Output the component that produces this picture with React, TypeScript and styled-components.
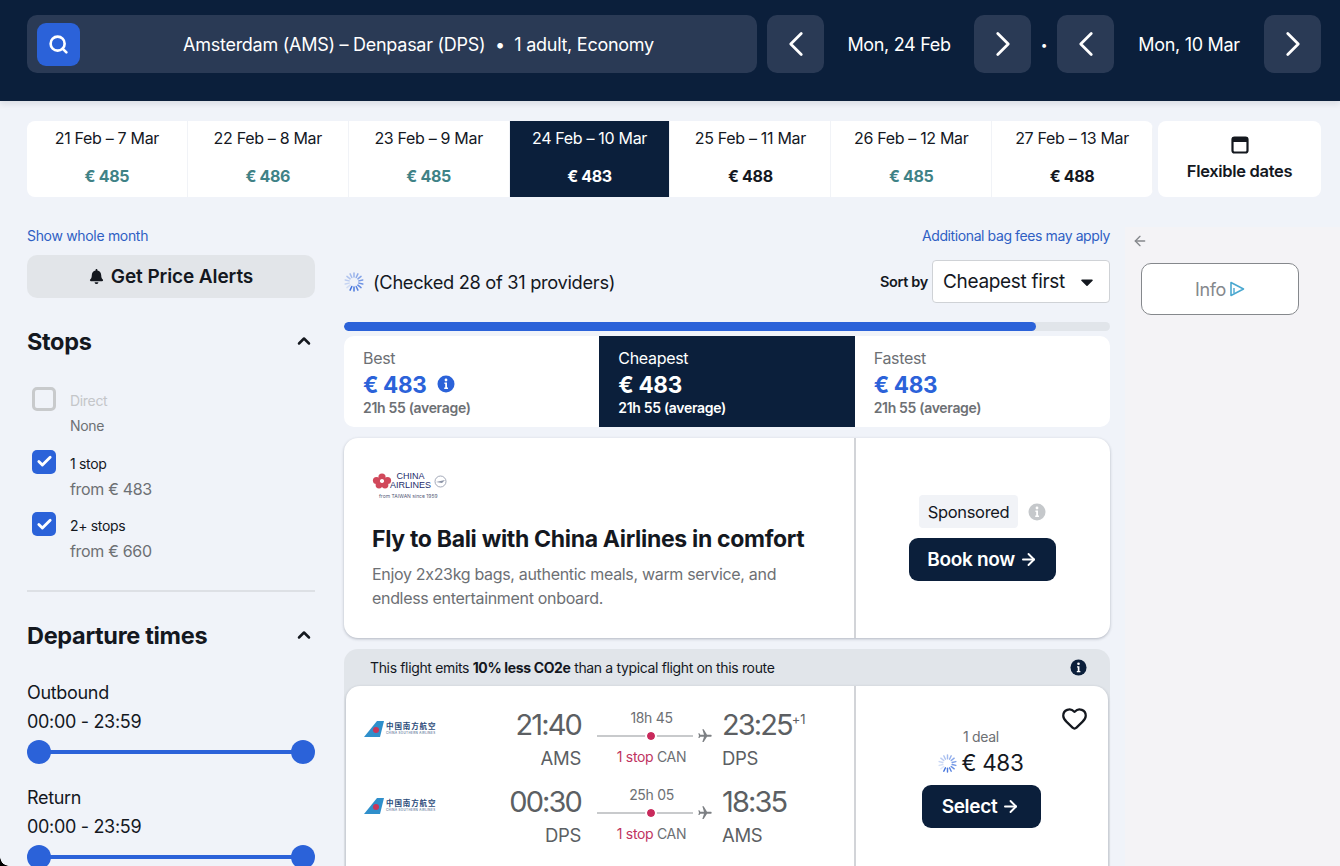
import styled, { createGlobalStyle } from "styled-components";
import { ArrowLeft, ArrowRight, Check, ChevronLeft, ChevronRight, ChevronUp, Heart, Search } from "lucide-react";
import { FaBell, FaCaretDown } from "react-icons/fa";

const navy = "#0b1f3b";
const blue = "#2b62d9";

const GlobalStyle = createGlobalStyle`
  html, body {
    margin: 0;
    height: 100%;
    overflow: hidden;
    background: #f0f3f9;
  }
  body {
    font-family: "Inter", "Liberation Sans", sans-serif;
    color: #14181f;
    letter-spacing: -0.02em;
  }
  * {
    box-sizing: border-box;
  }
`;

const dateCells = [
  { label: "21 Feb – 7 Mar", price: "€ 485", cheap: true },
  { label: "22 Feb – 8 Mar", price: "€ 486", cheap: true },
  { label: "23 Feb – 9 Mar", price: "€ 485", cheap: true },
  { label: "24 Feb – 10 Mar", price: "€ 483", selected: true },
  { label: "25 Feb – 11 Mar", price: "€ 488" },
  { label: "26 Feb – 12 Mar", price: "€ 485", cheap: true },
  { label: "27 Feb – 13 Mar", price: "€ 488" },
];

const legs = [
  { dep: "21:40", from: "AMS", time: "18h 45", arr: "23:25", plus: "+1", to: "DPS" },
  { dep: "00:30", from: "DPS", time: "25h 05", arr: "18:35", to: "AMS" },
];

const Spinner = ({ size = 20 }: { size?: number }) => (
  <svg width={size} height={size} viewBox="0 0 20 20">
    {Array.from({ length: 14 }).map((_, i) => (
      <line
        key={i}
        x1="10"
        y1="1"
        x2="10"
        y2="5"
        stroke={blue}
        strokeWidth="1.5"
        strokeLinecap="round"
        opacity={0.15 + (((i + 5) % 14) / 14) * 0.8}
        transform={`rotate(${(i * 360) / 14} 10 10)`}
      />
    ))}
  </svg>
);

const InfoDot = ({ color, size = 18 }: { color: string; size?: number }) => (
  <svg width={size} height={size} viewBox="0 0 18 18">
    <circle cx="9" cy="9" r="8.5" fill={color} />
    <circle cx="9" cy="5" r="1.4" fill="#fff" />
    <path d="M7.4 7.6h2.6v5h1v1.3H7.2v-1.3h1v-3.7h-.8z" fill="#fff" />
  </svg>
);

const PlaneIcon = () => (
  <svg width="16" height="16" viewBox="0 0 24 24" style={{ transform: "rotate(90deg)" }}>
    <path
      d="M21 16v-2l-8-5V3.5c0-.83-.67-1.5-1.5-1.5S10 2.67 10 3.5V9l-8 5v2l8-2.5V19l-2 1.5V22l3.5-1 3.5 1v-1.5L13 19v-5.5l8 2.5z"
      fill="#7d8084"
    />
  </svg>
);

const SouthernLogo = () => (
  <LogoRow>
    <svg width="20" height="16" viewBox="0 0 20 16">
      <path d="M0 16 L13 0 H20 L16 16 Z" fill="#2f8fcb" />
      <circle cx="12" cy="9" r="3" fill="#c9365a" />
    </svg>
    <LogoText>
      <LogoCn>中国南方航空</LogoCn>
      <LogoEn>CHINA SOUTHERN AIRLINES</LogoEn>
    </LogoText>
  </LogoRow>
);

const ChinaAirlinesLogo = () => (
  <AdLogo>
    <AdLogoTop>
      <svg width="20" height="16" viewBox="0 0 20 16">
        <circle cx="10" cy="4" r="3.6" fill="#d1495b" />
        <circle cx="4.5" cy="7.5" r="3.6" fill="#d1495b" />
        <circle cx="15.5" cy="7.5" r="3.6" fill="#d1495b" />
        <circle cx="7" cy="12" r="3.4" fill="#d1495b" />
        <circle cx="13" cy="12" r="3.4" fill="#d1495b" />
        <circle cx="10" cy="8" r="2" fill="#fff" />
      </svg>
      <AdLogoName>
        CHINA
        <br />
        AIRLINES
      </AdLogoName>
      <svg width="13" height="13" viewBox="0 0 13 13">
        <circle cx="6.5" cy="6.5" r="5.5" fill="none" stroke="#8b93a6" strokeWidth="0.8" />
        <path d="M2 7 L11 5 L8 8 Z" fill="#8b93a6" />
      </svg>
    </AdLogoTop>
    <AdLogoTag>from TAIWAN since 1959</AdLogoTag>
  </AdLogo>
);

export default function App() {
  return (
    <Page>
      <GlobalStyle />
      <Header>
        <SearchBar>
          <SearchButton>
            <Search size={21} strokeWidth={3} color="#fff" />
          </SearchButton>
          <SearchText>Amsterdam (AMS) – Denpasar (DPS) &nbsp;•&nbsp; 1 adult, Economy</SearchText>
        </SearchBar>
        <NavButton>
          <ChevronLeft size={42} strokeWidth={1.6} />
        </NavButton>
        <DateText>Mon, 24 Feb</DateText>
        <NavButton>
          <ChevronRight size={42} strokeWidth={1.6} />
        </NavButton>
        <Dot>•</Dot>
        <NavButton>
          <ChevronLeft size={42} strokeWidth={1.6} />
        </NavButton>
        <DateText>Mon, 10 Mar</DateText>
        <NavButton>
          <ChevronRight size={42} strokeWidth={1.6} />
        </NavButton>
      </Header>

      <DateStrip>
        <DateCells>
          {dateCells.map((c) => (
            <DateCell key={c.label} $selected={c.selected}>
              <span>{c.label}</span>
              <DatePrice $cheap={c.cheap}>{c.price}</DatePrice>
            </DateCell>
          ))}
        </DateCells>
        <FlexCell>
          <svg width="18" height="18" viewBox="0 0 18 18">
            <rect x="1.5" y="1.5" width="15" height="15" rx="2" fill="none" stroke="#14181f" strokeWidth="2.2" />
            <rect x="1.5" y="1.5" width="15" height="4.5" fill="#14181f" />
          </svg>
          Flexible dates
        </FlexCell>
      </DateStrip>

      <Main>
        <Sidebar>
          <SmallLink>Show whole month</SmallLink>
          <AlertButton>
            <FaBell size={15} />
            Get Price Alerts
          </AlertButton>

          <SectionHead>
            Stops
            <ChevronUp size={20} strokeWidth={3} />
          </SectionHead>
          <StopList>
            <StopRow>
              <CheckBox />
              <div>
                <StopName $muted>Direct</StopName>
                <StopPrice $small>None</StopPrice>
              </div>
            </StopRow>
            <StopRow>
              <CheckBox $checked>
                <Check size={17} strokeWidth={4} color="#fff" />
              </CheckBox>
              <div>
                <StopName>1 stop</StopName>
                <StopPrice>from € 483</StopPrice>
              </div>
            </StopRow>
            <StopRow>
              <CheckBox $checked>
                <Check size={17} strokeWidth={4} color="#fff" />
              </CheckBox>
              <div>
                <StopName>2+ stops</StopName>
                <StopPrice>from € 660</StopPrice>
              </div>
            </StopRow>
          </StopList>
          <Divider />
          <SectionHead>
            Departure times
            <ChevronUp size={20} strokeWidth={3} />
          </SectionHead>
          <TimeBlock>
            <TimeLabel>Outbound</TimeLabel>
            <TimeLabel>00:00 - 23:59</TimeLabel>
            <Slider>
              <Thumb />
              <Thumb />
            </Slider>
          </TimeBlock>
          <TimeBlock>
            <TimeLabel>Return</TimeLabel>
            <TimeLabel>00:00 - 23:59</TimeLabel>
            <Slider>
              <Thumb />
              <Thumb />
            </Slider>
          </TimeBlock>
        </Sidebar>

        <Results>
          <BagRow>
            <SmallLink>Additional bag fees may apply</SmallLink>
          </BagRow>
          <StatusRow>
            <Spinner />
            <StatusText>(Checked 28 of 31 providers)</StatusText>
            <SortLabel>Sort by</SortLabel>
            <SortSelect>
              Cheapest first
              <FaCaretDown size={20} />
            </SortSelect>
          </StatusRow>
          <Progress>
            <ProgressFill style={{ width: "90.4%" }} />
          </Progress>
          <Tabs>
            <Tab>
              <TabName>Best</TabName>
              <TabPrice>
                € 483 <InfoDot color={blue} />
              </TabPrice>
              <TabTime>21h 55 (average)</TabTime>
            </Tab>
            <Tab $active>
              <TabName>Cheapest</TabName>
              <TabPrice $active>€ 483</TabPrice>
              <TabTime>21h 55 (average)</TabTime>
            </Tab>
            <Tab>
              <TabName>Fastest</TabName>
              <TabPrice>€ 483</TabPrice>
              <TabTime>21h 55 (average)</TabTime>
            </Tab>
          </Tabs>

          <AdCard>
            <AdMain>
              <ChinaAirlinesLogo />
              <AdTitle>Fly to Bali with China Airlines in comfort</AdTitle>
              <AdCopy>Enjoy 2x23kg bags, authentic meals, warm service, and endless entertainment onboard.</AdCopy>
            </AdMain>
            <AdSide>
              <SponsoredRow>
                <Sponsored>Sponsored</Sponsored>
                <InfoDot color="#c5c8cb" />
              </SponsoredRow>
              <DarkButton $wide>
                Book now <ArrowRight size={19} strokeWidth={2.4} />
              </DarkButton>
            </AdSide>
          </AdCard>

          <FlightWrap>
            <EcoBand>
              <span>
                This flight emits <b>10% less CO2e</b> than a typical flight on this route
              </span>
              <InfoDot color={navy} size={17} />
            </EcoBand>
            <FlightCard>
              <Legs>
                {legs.map((l) => (
                  <Leg key={l.dep}>
                    <SouthernLogo />
                    <Endpoint $right>
                      <Clock>{l.dep}</Clock>
                      <Code>{l.from}</Code>
                    </Endpoint>
                    <PathBox>
                      <Duration>{l.time}</Duration>
                      <PathLine>
                        <Track>
                          <StopDot />
                        </Track>
                        <PlaneIcon />
                      </PathLine>
                      <StopInfo>
                        <em>1 stop</em> CAN
                      </StopInfo>
                    </PathBox>
                    <Endpoint>
                      <Clock>
                        {l.arr}
                        {l.plus && <sup>{l.plus}</sup>}
                      </Clock>
                      <Code>{l.to}</Code>
                    </Endpoint>
                  </Leg>
                ))}
              </Legs>
              <DealSide>
                <HeartBox>
                  <Heart size={27} strokeWidth={2} />
                </HeartBox>
                <DealCount>1 deal</DealCount>
                <DealPrice>
                  <Spinner size={19} />€ 483
                </DealPrice>
                <DarkButton>
                  Select <ArrowRight size={19} strokeWidth={2.4} />
                </DarkButton>
              </DealSide>
            </FlightCard>
          </FlightWrap>
        </Results>

        <RightRail>
          <BackArrow>
            <ArrowLeft size={16} />
          </BackArrow>
          <InfoButton>
            Info
            <svg width="16" height="16" viewBox="0 0 16 16">
              <path d="M2 1.5 L14.5 8 L2 14.5 Z" fill="none" stroke="#4aa8d0" strokeWidth="1.6" strokeLinejoin="round" />
              <path d="M5 7v5" stroke="#4aa8d0" strokeWidth="1.4" />
            </svg>
          </InfoButton>
        </RightRail>
      </Main>
    </Page>
  );
}

const Page = styled.div`
  position: relative;
  height: 866px;
  overflow: hidden;
  background: #f0f3f9;
  &::after {
    content: "";
    position: absolute;
    left: 0;
    bottom: 0;
    width: 9px;
    height: 9px;
    background: radial-gradient(circle at 100% 0, transparent 8.5px, #000 9px);
  }
`;

const Header = styled.header`
  height: 101px;
  padding: 15px 19px 28px 27px;
  display: flex;
  align-items: stretch;
  background: ${navy};
  color: #fff;
  box-shadow: 0 3px 6px rgba(20, 30, 50, 0.1);
`;

const SearchBar = styled.div`
  width: 730px;
  margin-right: 10px;
  padding: 8px 10px;
  display: flex;
  align-items: center;
  background: #2a3a55;
  border-radius: 10px;
`;

const SearchButton = styled.div`
  width: 43px;
  height: 43px;
  display: flex;
  align-items: center;
  justify-content: center;
  background: ${blue};
  border-radius: 9px;
`;

const SearchText = styled.div`
  flex: 1;
  padding-left: 10px;
  text-align: center;
  font-size: 18px;
  letter-spacing: -0.015em;
  white-space: nowrap;
`;

const NavButton = styled.div`
  width: 57px;
  display: flex;
  align-items: center;
  justify-content: center;
  background: #2a3a55;
  border-radius: 10px;
`;

const DateText = styled.div`
  width: 150px;
  display: flex;
  align-items: center;
  justify-content: center;
  font-size: 18px;
`;

const Dot = styled.div`
  width: 26px;
  display: flex;
  align-items: center;
  justify-content: center;
  font-size: 12px;
`;

const DateStrip = styled.div`
  margin-top: 20px;
  padding: 0 19px 0 27px;
  display: flex;
  gap: 5px;
  height: 76px;
`;

const DateCells = styled.div`
  width: 1126px;
  display: grid;
  grid-template-columns: repeat(7, 1fr);
  background: #fff;
  border-radius: 8px;
  overflow: hidden;
`;

const DateCell = styled.div<{ $selected?: boolean }>`
  padding: 7px 0 11px;
  display: flex;
  flex-direction: column;
  align-items: center;
  justify-content: space-between;
  font-size: 16px;
  white-space: nowrap;
  background: ${(p) => (p.$selected ? navy : "transparent")};
  color: ${(p) => (p.$selected ? "#fff" : "#14181f")};
  border-right: 1px solid #f1f3f7;
`;

const DatePrice = styled.strong<{ $cheap?: boolean }>`
  font-size: 16px;
  font-weight: 700;
  color: ${(p) => (p.$cheap ? "#3f8286" : "inherit")};
`;

const FlexCell = styled.div`
  flex: 1;
  padding-bottom: 1px;
  display: flex;
  flex-direction: column;
  align-items: center;
  justify-content: center;
  gap: 7px;
  font-size: 16.5px;
  font-weight: 600;
  background: #fff;
  border-radius: 8px;
`;

const Main = styled.main`
  margin-top: 30px;
  padding-left: 27px;
  display: grid;
  grid-template-columns: 288px 766px 1fr;
  column-gap: 29px;
`;

const Sidebar = styled.aside`
  display: flex;
  flex-direction: column;
`;

const SmallLink = styled.a`
  font-size: 14px;
  line-height: 17px;
  color: #2f5fc4;
`;

const AlertButton = styled.div`
  height: 43px;
  margin-top: 11px;
  display: flex;
  align-items: center;
  justify-content: center;
  gap: 7px;
  font-size: 19px;
  font-weight: 600;
  letter-spacing: -0.005em;
  background: #e2e5e9;
  border-radius: 10px;
`;

const SectionHead = styled.h3`
  margin: 28px 0 0;
  padding-right: 1px;
  display: flex;
  align-items: center;
  justify-content: space-between;
  height: 30px;
  font-size: 23.5px;
  font-weight: 700;
`;

const StopList = styled.div`
  margin-top: 31px;
  padding-left: 5px;
  display: flex;
  flex-direction: column;
  gap: 13.5px;
`;

const StopRow = styled.div`
  display: flex;
  gap: 14px;
`;

const CheckBox = styled.div<{ $checked?: boolean }>`
  flex: none;
  width: 24px;
  height: 24px;
  display: flex;
  align-items: center;
  justify-content: center;
  border-radius: 5px;
  background: ${(p) => (p.$checked ? blue : "transparent")};
  border: ${(p) => (p.$checked ? "none" : "3px solid #c8cacc")};
`;

const StopName = styled.div<{ $muted?: boolean }>`
  padding-top: 5px;
  font-size: 14px;
  line-height: 17px;
  color: ${(p) => (p.$muted ? "#c4c6c9" : "#14181f")};
`;

const StopPrice = styled.div<{ $small?: boolean }>`
  margin-top: 7px;
  font-size: ${(p) => (p.$small ? "14px" : "16px")};
  line-height: 20px;
  color: #6d7074;
`;

const Divider = styled.div`
  margin-top: 29px;
  height: 2px;
  background: #dde0e5;
`;

const TimeBlock = styled.div`
  margin-top: 23px;
  ${SectionHead} + & {
    margin-top: 32px;
  }
`;

const TimeLabel = styled.div`
  font-size: 18px;
  line-height: 22px;
  & + & {
    margin-top: 7px;
  }
`;

const Slider = styled.div`
  position: relative;
  margin-top: 7px;
  height: 24px;
  display: flex;
  align-items: center;
  justify-content: space-between;
  &::before {
    content: "";
    position: absolute;
    left: 12px;
    right: 12px;
    top: 10px;
    height: 4px;
    background: ${blue};
  }
`;

const Thumb = styled.div`
  position: relative;
  width: 24px;
  height: 24px;
  background: ${blue};
  border-radius: 50%;
`;

const Results = styled.section`
  display: flex;
  flex-direction: column;
`;

const BagRow = styled.div`
  display: flex;
  justify-content: flex-end;
  letter-spacing: -0.025em;
`;

const StatusRow = styled.div`
  height: 43px;
  margin-top: 16px;
  display: flex;
  align-items: center;
`;

const StatusText = styled.div`
  flex: 1;
  margin-left: 9px;
  font-size: 18.3px;
`;

const SortLabel = styled.div`
  margin-right: 4px;
  font-size: 14.5px;
  font-weight: 600;
`;

const SortSelect = styled.div`
  width: 178px;
  height: 43px;
  padding: 0 12px 0 10px;
  display: flex;
  align-items: center;
  justify-content: space-between;
  font-size: 19px;
  background: #fff;
  border: 1px solid #cfd2d6;
  border-radius: 4px;
`;

const Progress = styled.div`
  height: 9px;
  margin-top: 19px;
  background: #e1e5ea;
  border-radius: 5px;
  overflow: hidden;
`;

const ProgressFill = styled.div`
  height: 100%;
  background: ${blue};
  border-radius: 5px;
`;

const Tabs = styled.div`
  height: 91px;
  margin-top: 5px;
  display: grid;
  grid-template-columns: repeat(3, 1fr);
  background: #fff;
  border-radius: 10px;
  overflow: hidden;
`;

const Tab = styled.div<{ $active?: boolean }>`
  padding: 12px 19px;
  background: ${(p) => (p.$active ? navy : "transparent")};
  color: ${(p) => (p.$active ? "#fff" : "#6d7074")};
`;

const TabName = styled.div`
  font-size: 16px;
  line-height: 20px;
`;

const TabPrice = styled.div<{ $active?: boolean }>`
  margin-top: 3px;
  display: flex;
  align-items: center;
  gap: 10px;
  height: 26px;
  font-size: 22.5px;
  font-weight: 700;
  color: ${(p) => (p.$active ? "#fff" : blue)};
`;

const TabTime = styled.div`
  margin-top: 2px;
  font-size: 14px;
  line-height: 17px;
  font-weight: 600;
`;

const AdCard = styled.article`
  height: 200px;
  margin-top: 11px;
  display: grid;
  grid-template-columns: 512px 1fr;
  background: #fff;
  border-radius: 14px;
  box-shadow: 0 1px 3px rgba(30, 40, 60, 0.3);
`;

const AdMain = styled.div`
  padding: 34px 28px 0;
  border-right: 2px solid #d2d4d8;
`;

const AdLogo = styled.div`
  width: 78px;
`;

const AdLogoTop = styled.div`
  display: flex;
  align-items: center;
  svg:first-child {
    margin-right: -2px;
  }
  svg:last-child {
    margin-left: 3px;
  }
`;

const AdLogoName = styled.div`
  font-family: "Liberation Sans", sans-serif;
  font-size: 9px;
  line-height: 9px;
  font-weight: 400;
  letter-spacing: 0;
  text-align: center;
  color: #1d2c6b;
`;

const AdLogoTag = styled.div`
  margin-top: 3px;
  padding-left: 7px;
  font-size: 5px;
  line-height: 6px;
  letter-spacing: 0;
  color: #555b78;
  white-space: nowrap;
`;

const AdTitle = styled.h2`
  margin: 25px 0 0;
  font-size: 23px;
  line-height: 30px;
  font-weight: 700;
  white-space: nowrap;
`;

const AdCopy = styled.p`
  margin: 8px 0 0;
  font-size: 16px;
  line-height: 24px;
  color: #6d7074;
`;

const AdSide = styled.div`
  display: flex;
  flex-direction: column;
  align-items: center;
  padding: 57px 1px 0 0;
  gap: 10px;
`;

const SponsoredRow = styled.div`
  display: flex;
  align-items: center;
  gap: 10px;
`;

const Sponsored = styled.div`
  padding: 0 9px;
  height: 33px;
  display: flex;
  align-items: center;
  font-size: 16.5px;
  background: #f1f3f7;
  border-radius: 4px;
`;

const DarkButton = styled.div<{ $wide?: boolean }>`
  width: ${(p) => (p.$wide ? "147px" : "119px")};
  height: 43px;
  display: flex;
  align-items: center;
  justify-content: center;
  gap: 4px;
  font-size: 19px;
  font-weight: 600;
  color: #fff;
  background: ${navy};
  border-radius: 9px;
`;

const FlightWrap = styled.div`
  margin-top: 11px;
  padding: 0 2px;
  background: #e1e5ea;
  border-radius: 14px 14px 0 0;
`;

const EcoBand = styled.div`
  height: 37px;
  padding: 0 21px 1px 24px;
  display: flex;
  align-items: center;
  justify-content: space-between;
  font-size: 14px;
  letter-spacing: -0.025em;
  b {
    font-weight: 700;
  }
`;

const FlightCard = styled.div`
  display: grid;
  grid-template-columns: 510px 1fr;
  height: 200px;
  background: #fff;
  border-radius: 14px;
  box-shadow: 0 1px 3px rgba(30, 40, 60, 0.3);
`;

const Legs = styled.div`
  padding: 21px 0 0 18px;
  border-right: 2px solid #d2d4d8;
`;

const Leg = styled.div`
  height: 77px;
  display: grid;
  grid-template-columns: 100px 117px 115px auto;
  column-gap: 0;
  justify-content: start;
`;

const LogoRow = styled.div`
  padding-top: 14px;
  display: flex;
  align-items: flex-start;
  gap: 2px;
`;

const LogoText = styled.div`
  display: flex;
  flex-direction: column;
`;

const LogoCn = styled.div`
  font-family: "Noto Sans CJK SC", sans-serif;
  font-size: 7.5px;
  line-height: 10px;
  letter-spacing: 0.9px;
  font-weight: 700;
  color: #2a4a78;
`;

const LogoEn = styled.div`
  font-size: 3px;
  line-height: 4px;
  letter-spacing: 0.12em;
  color: #2a4a78;
  white-space: nowrap;
`;

const Endpoint = styled.div<{ $right?: boolean }>`
  text-align: ${(p) => (p.$right ? "right" : "left")};
  margin: ${(p) => (p.$right ? "0" : "0 0 0 26px")};
  color: #5c5f63;
`;

const Clock = styled.div`
  font-size: 29px;
  line-height: 36px;
  letter-spacing: -0.065em;
  white-space: nowrap;
  sup {
    font-size: 13px;
    line-height: 0;
    letter-spacing: -0.02em;
    vertical-align: 11px;
  }
`;

const Code = styled.div`
  margin-top: 3px;
  font-size: 18.5px;
  line-height: 24px;
`;

const PathBox = styled.div`
  padding: 2px 0 0 16px;
  width: 132px;
  display: flex;
  flex-direction: column;
  color: #6d7074;
  font-size: 14px;
`;

const Duration = styled.div`
  width: 109px;
  line-height: 17px;
  text-align: center;
`;

const PathLine = styled.div`
  margin-top: 2px;
  display: flex;
  align-items: center;
  gap: 4px;
`;

const Track = styled.div`
  position: relative;
  width: 96px;
  height: 2px;
  background: #c8cacc;
`;

const StopDot = styled.div`
  position: absolute;
  left: 50%;
  top: -3px;
  width: 8px;
  height: 8px;
  margin-left: 2px;
  background: #c92a5c;
  border-radius: 50%;
  outline: 2px solid #fff;
`;

const StopInfo = styled.div`
  width: 109px;
  margin-top: 4px;
  line-height: 18px;
  text-align: center;
  white-space: nowrap;
  em {
    font-style: normal;
    color: #c0335f;
  }
`;

const DealSide = styled.div`
  position: relative;
  padding: 42px 2px 0 0;
  display: flex;
  flex-direction: column;
  align-items: center;
`;

const HeartBox = styled.div`
  position: absolute;
  top: 19px;
  right: 20px;
  height: 27px;
`;

const DealCount = styled.div`
  font-size: 14px;
  line-height: 17px;
  color: #6d7074;
`;

const DealPrice = styled.div`
  margin: 3px 0 7px;
  display: flex;
  align-items: center;
  gap: 4px;
  font-size: 22.5px;
  line-height: 30px;
`;

const RightRail = styled.aside`
  margin: 0 0 -700px -14px;
  padding: 0 8px 700px 16px;
  display: flex;
  flex-direction: column;
  align-items: flex-start;
  background: #f4f3f6;
`;

const BackArrow = styled.div`
  margin: 6px 0 0 -9px;
  height: 16px;
  color: #85888c;
`;

const InfoButton = styled.div`
  width: 158px;
  height: 52px;
  margin-top: 14px;
  display: flex;
  align-items: center;
  justify-content: center;
  gap: 3px;
  font-size: 18px;
  color: #85888c;
  background: #fff;
  border: 1px solid #85888c;
  border-radius: 10px;
`;
